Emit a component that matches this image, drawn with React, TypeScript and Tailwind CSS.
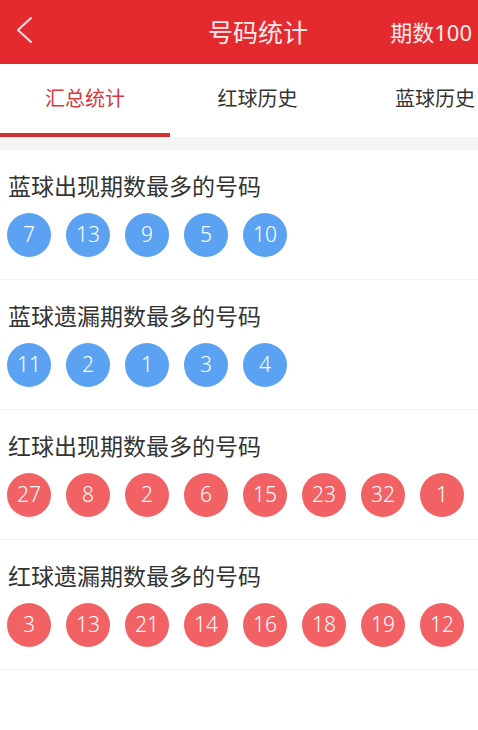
const sections = [
  { title: '蓝球出现期数最多的号码', color: 'blue', nums: [7, 13, 9, 5, 10] },
  { title: '蓝球遗漏期数最多的号码', color: 'blue', nums: [11, 2, 1, 3, 4] },
  { title: '红球出现期数最多的号码', color: 'red', nums: [27, 8, 2, 6, 15, 23, 32, 1] },
  { title: '红球遗漏期数最多的号码', color: 'red', nums: [3, 13, 21, 14, 16, 18, 19, 12] },
];

const tabs = [
  { label: '汇总统计', width: 'w-[170px]' },
  { label: '红球历史', width: 'w-[175px]' },
  { label: '蓝球历史', width: 'w-[180px]' },
];

export default function App() {
  return (
    <div
      className="w-[478px] h-[730px] bg-white overflow-hidden"
      style={{ fontFamily: '"Noto Sans", "Noto Sans CJK SC", sans-serif' }}
    >
      {/* header */}
      <div className="h-[64px] bg-[#e42a2f] flex items-center relative">
        <button className="absolute left-[12px] top-[14px] w-[24px] h-[32px] flex items-center justify-center">
          <svg width="18" height="28" viewBox="0 0 18 28" fill="none">
            <polyline
              points="16,2 3,14 16,26"
              stroke="#fbe3e3"
              strokeWidth="2"
              strokeLinecap="round"
              strokeLinejoin="round"
            />
          </svg>
        </button>
        <div className="flex-1 text-center text-[25px] text-[#fdecec] leading-none pl-[38px]">号码统计</div>
        <div className="absolute right-[6px] top-0 h-[64px] flex items-center text-[22px] text-[#fdecec]">
          期数100
        </div>
      </div>

      {/* tabs */}
      <div className="h-[73px] flex overflow-hidden bg-white">
        {tabs.map((t, i) => (
          <div key={t.label} className={`${t.width} shrink-0 flex flex-col`}>
            <div
              className={`flex-1 flex items-center justify-center text-[20px] ${
                i === 0 ? 'text-[#d63a3d]' : 'text-[#333333]'
              }`}
            >
              {t.label}
            </div>
            <div className={`h-[4px] ${i === 0 ? 'bg-[#d23236]' : 'bg-transparent'}`} />
          </div>
        ))}
      </div>
      <div className="h-[13px] bg-[#f5f5f5]" />

      {/* sections */}
      {sections.map((s) => (
        <div key={s.title} className="pt-[22px] pb-[22px] border-b border-[#f0f0f0]">
          <div className="h-[28px] leading-[28px] text-[23px] text-[#333333] pl-[8px] whitespace-nowrap">
            {s.title}
          </div>
          <div className="mt-[13px] flex gap-[15px] pl-[7px]">
            {s.nums.map((n, j) => (
              <div
                key={j}
                className={`w-[44px] h-[44px] rounded-full flex items-center justify-center text-[21px] font-light text-white ${
                  s.color === 'blue' ? 'bg-[#5ba2f2]' : 'bg-[#f26163]'
                }`}
              >
                {n}
              </div>
            ))}
          </div>
        </div>
      ))}
    </div>
  );
}
